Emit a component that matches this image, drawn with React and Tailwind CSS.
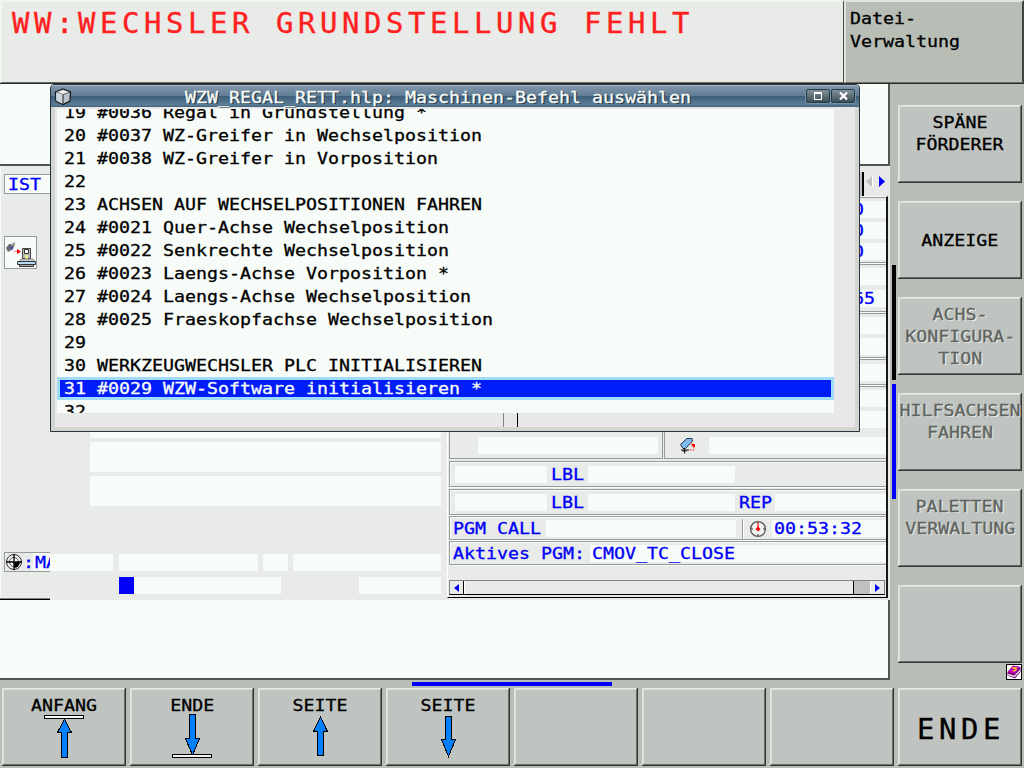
import React from "react";

function T({ children, center = false, className = "" }) {
  return (
    <span
      className={`inline-block shrink-0 whitespace-pre scale-x-[1.1419] [-webkit-text-stroke:0.3px_currentColor] ${
        center ? "origin-center" : "origin-left"
      } ${className}`}
    >
      {children}
    </span>
  );
}

function Big({ children, className = "" }) {
  return (
    <span
      className={`inline-block shrink-0 origin-left scale-x-105 whitespace-pre text-[27.5px] leading-8 tracking-[4.396px] [-webkit-text-stroke:0.35px_currentColor] ${className}`}
    >
      {children}
    </span>
  );
}

const KEY =
  "flex h-[78px] w-[124px] shrink-0 flex-col items-center bg-[#c0c4c0] pt-[7px] leading-[22px] shadow-[inset_-1px_-1px_#353535,inset_1px_1px_#e4e9e3,inset_-2px_-2px_#686c68,inset_2px_2px_#d9ded8]";

function Key({ lines = [], disabled = false, children }) {
  return (
    <div className={KEY}>
      {lines.map((l, i) => (
        <div key={i} className="flex h-[22px] justify-center">
          <T
            center
            className={disabled ? "text-[#606460] [text-shadow:1px_1px_#eef2ee]" : "text-black"}
          >
            {l}
          </T>
        </div>
      ))}
      {children}
    </div>
  );
}

const ARROWS = {
  top: "M20.5 5 L27.5 18.5 H23.5 V43.5 H17.5 V18.5 H13.5 Z",
  bottom: "M17.5 0.5 H23.5 V24.5 H27.5 L20.5 41 L13.5 24.5 H17.5 Z",
  up: "M20.5 1 L27.5 15.5 H23.5 V39.5 H17.5 V15.5 H13.5 Z",
  down: "M17.5 0.5 H23.5 V23.5 H27.5 L20.5 40.5 L13.5 23.5 H17.5 Z",
};

function Arrow({ kind }) {
  return (
    <svg
      width="42"
      height="46"
      viewBox="-1 0 42 46"
      className={kind === "up" || kind === "down" ? "-mt-px" : "-mt-[3px]"}
      shapeRendering="crispEdges"
    >
      <path d={ARROWS[kind]} fill="#0080ff" stroke="#000" />
      {kind === "top" && <rect x="0.5" y="1.5" width="39" height="3" fill="#f8fcf8" stroke="#000" />}
      {kind === "bottom" && <rect x="0.5" y="40.5" width="39" height="3" fill="#f4f0f4" stroke="#000" />}
    </svg>
  );
}

const SIDE = [
  { lines: ["SPÄNE", "FÖRDERER"] },
  { lines: [" ", "ANZEIGE"] },
  { lines: ["ACHS-", "KONFIGURA-", "TION"], disabled: true },
  { lines: ["HILFSACHSEN", "FAHREN"], disabled: true },
  { lines: ["PALETTEN", "VERWALTUNG"], disabled: true },
  { lines: [] },
];

const LIST = [
  "19 #0036 Regal in Grundstellung *",
  "20 #0037 WZ-Greifer in Wechselposition",
  "21 #0038 WZ-Greifer in Vorposition",
  "22",
  "23 ACHSEN AUF WECHSELPOSITIONEN FAHREN",
  "24 #0021 Quer-Achse Wechselposition",
  "25 #0022 Senkrechte Wechselposition",
  "26 #0023 Laengs-Achse Vorposition *",
  "27 #0024 Laengs-Achse Wechselposition",
  "28 #0025 Fraeskopfachse Wechselposition",
  "29",
  "30 WERKZEUGWECHSLER PLC INITIALISIEREN",
  "31 #0029 WZW-Software initialisieren *",
  "32",
];

function CubeIcon() {
  return (
    <svg width="18" height="18" viewBox="0 0 18 18">
      <path d="M1.5 4 L9 1 L16.5 4 L16 13 L9 16.5 L2 13 Z" fill="#b9c3cb" stroke="#111" strokeWidth="1.2" />
      <path d="M2 4 L9 1.5 L16 4 L9 6.5 Z" fill="#eef3f6" stroke="#333" strokeWidth=".7" />
      <path d="M9 6.500 V16 L2.300 12.700 L2 4.500 Z" fill="#ccd5dc" />
      <path d="M9 6.500 V16" stroke="#222" />
    </svg>
  );
}

function TitleButton({ children }) {
  return (
    <div className="flex h-[14px] w-6 items-center justify-center rounded-[2px] border border-[#283c48] bg-linear-to-b from-[#82909c] to-[#3c5058] shadow-[0_0_0_1px_#7490a4]">
      {children}
    </div>
  );
}

function HelpWindow() {
  return (
    <div className="absolute left-[50px] top-[84px] flex h-[348px] w-[810px] flex-col overflow-hidden rounded-t-[4px] border border-[#26353f] bg-[#d5d5cf]">
      <div className="flex h-[22px] shrink-0 items-center border-t border-[#a9b5c4] bg-[linear-gradient(#8296ac_0%,#607e94_46%,#3e5f7a_50%,#5c7d94_90%,#3c5f7c_100%)] pl-[3px] pr-1">
        <CubeIcon />
        <div className="ml-[113px] h-[21px] flex-1 leading-[23px] text-[#f8fcf8] [text-shadow:1px_1px_#243440]">
          <T>WZW_REGAL_RETT.hlp: Maschinen-Befehl auswählen</T>
        </div>
        <div className="-mt-[2px] flex gap-px">
          <TitleButton>
            <span className="h-2 w-2 border border-t-2 border-white" />
          </TitleButton>
          <TitleButton>
            <svg width="9" height="8" viewBox="0 0 9 8">
              <path d="M1 .5 L8 7.5 M8 .5 L1 7.5" stroke="#fff" strokeWidth="2.2" />
            </svg>
          </TitleButton>
        </div>
      </div>
      <div className="mb-1 ml-1 mr-1 flex flex-1 flex-col bg-[#e8e8e8] pl-[2px] pt-[2px]">
        <div className="h-[304px] w-[777px] overflow-hidden bg-[#f8fcf8]">
          <div className="-mt-2">
            {LIST.map((l) =>
              l.startsWith("31") ? (
                <div
                  key={l}
                  className="h-[23px] border-[3px] border-[#a0dcf8] bg-[#001cf8] pl-[3.5px] leading-[17px] text-[#f8fcf8]"
                >
                  <T>{l}</T>
                </div>
              ) : (
                <div key={l} className="h-[23px] pl-[6.5px] leading-[23px]">
                  <T>{l}</T>
                </div>
              )
            )}
          </div>
        </div>
        <div className="flex h-[14px]">
          <div className="w-[447px] border-r border-[#808480]" />
          <div className="w-[14px] border-r border-black" />
        </div>
      </div>
    </div>
  );
}

const W = "bg-[#f8fcf8]";
const BOX = "flex shrink-0 border border-r-0 border-[#989c98] shadow-[inset_1px_1px_#f8fcf8,0_1px_#f8fcf8]";

function LeftPanel() {
  return (
    <div className="flex w-[447px] flex-col border-l border-[#f8fcf8] bg-[#e8ebe7]">
      <div className={`ml-[3px] mt-[8px] h-5 w-[60px] border border-[#989c98] pl-[3px] leading-5 text-[#0000f8] ${W}`}>
        <T>IST</T>
      </div>
      <div className={`ml-[3px] mt-[42px] h-[33px] w-[33px] border border-[#989c98] ${W}`}>
        <svg width="31" height="31" viewBox="0 0 31 31">
          <path d="M1 11 L4 7 L10 7 L8 12 L3 15 Z" fill="#686c70" />
          <path d="M6 8 L10 6" stroke="#aaa" strokeWidth="2" />
          <path d="M4 10 h4 v3" fill="#4444c0" />
          <path d="M9 14.5 H12" stroke="#e88" />
          <path d="M12 12 L16 14.5 L12 17 Z" fill="#f00" />
          <path d="M17.500 11.500 h8 v10 h-8 Z" fill="#b8bcb8" stroke="#444" />
          <path d="M19.500 12.500 h4 v4 h-4 Z" fill="#fff" stroke="#333" />
          <path d="M20 18 h3 v4 h-3 Z" fill="#ecec90" />
          <path d="M16 22 h12 l2 3 h-16 Z" fill="#ccc" stroke="#666" strokeWidth=".7" />
          <path d="M12.500 24.500 h18 v3 h-18 Z" fill="#b8d8f8" stroke="#333" />
          <path d="M14.500 27.500 h14 v2 h-14 Z" fill="#aaa" stroke="#333" />
        </svg>
      </div>
      <div className="ml-[89px] mt-[139px] flex w-[351px] flex-col gap-1">
        <div className={`h-[30px] ${W}`} />
        <div className={`h-[30px] ${W}`} />
        <div className={`h-[30px] ${W}`} />
      </div>
      <div className="ml-[3px] mt-[46px] flex h-5">
        <div className="flex w-[46px] overflow-hidden border border-r-0 border-[#989c98]">
          <svg width="18" height="18" viewBox="0 0 18 18" className="shrink-0">
            <circle cx="9" cy="9" r="7.500" fill="#f0f2f0" stroke="#333" />
            <circle cx="9" cy="9" r="4.500" fill="#fff" stroke="#333" strokeWidth=".8" />
            <path d="M9 9 H15 A6 6 0 0 1 9 15 Z" fill="#000" />
            <path d="M9 1 V17 M1 9 H17" stroke="#000" strokeWidth="1.300" />
          </svg>
          <span className="w-[10px] leading-5 text-[#0000f8]">
            <T>:</T>
          </span>
          <span className={`flex-1 overflow-hidden pl-[2px] leading-5 text-[#0000f8] ${W}`}>
            <T>MA</T>
          </span>
        </div>
        <div className="flex">
          <div className={`mt-[2px] h-[17px] w-[63px] ${W}`} />
          <div className={`ml-[6px] mt-[2px] h-[17px] w-[139px] ${W}`} />
          <div className={`ml-[5px] mt-[2px] h-[17px] w-[25px] ${W}`} />
          <div className={`ml-[5px] mt-[2px] h-[17px] w-[148px] ${W}`} />
        </div>
      </div>
      <div className="ml-[118px] mt-[5px] flex h-[17px]">
        <div className="w-[15px] bg-[#0000f8]" />
        <div className={`w-[147px] ${W}`} />
        <div className={`ml-[78px] w-[82px] ${W}`} />
      </div>
      <div className="-ml-px mt-1 h-[2px] w-[50px] border-b border-t border-b-black border-t-[#808480]" />
    </div>
  );
}

const STUBS = [
  { mt: "mt-[3px]", text: "0" },
  { mt: "mt-[4px]", text: "0" },
  { mt: "mt-[4px]", text: "0" },
  { mt: "mt-[2px]", line: true },
  { mt: "mt-[3px]" },
  { mt: "mt-[5px]", text: "65" },
  { mt: "mt-[4px]", line: true },
  { mt: "mt-[3px]" },
  { mt: "mt-[4px]" },
  { mt: "mt-[2px]", line: true },
  { mt: "mt-[4px]" },
  { mt: "mt-[3px]", line: true },
  { mt: "mt-[3px]" },
  { mt: "mt-[4px]" },
];

function ClockIcon() {
  return (
    <svg width="18" height="18" viewBox="0 0 18 18" className="shrink-0">
      <circle cx="9" cy="9" r="7.400" fill="#f0f4f0" stroke="#555" strokeWidth="1.300" />
      <path d="M9 2 V4 M9 14 V16 M2 9 H4 M14 9 H16" stroke="#333" />
      <path d="M9 2.500 V9" stroke="#f44" strokeWidth="1.500" />
      <path d="M9 6.500 L11.500 9 L9 11.500 L6.500 9 Z" fill="#f00" />
    </svg>
  );
}

function StatusPanel() {
  return (
    <div className="flex flex-1 flex-col bg-[#e8e8e8]">
      <div className="flex h-[30px] items-end justify-end">
        <div className="h-6 w-10 border-r-2 border-black bg-[#c0c0c0]" />
        <svg width="26" height="24" viewBox="0 0 26 24">
          <path d="M8 4 V15 L2 9.500 Z" fill="#c0c0c0" />
          <path d="M8.500 4 V15" stroke="#fff" />
          <path d="M15 4 V15 L21 9.500 Z" fill="#0000f8" />
        </svg>
      </div>
      <div className="flex h-[402px] w-[441px] flex-col border-b border-l border-r-2 border-b-black border-l-white border-r-[#181818] border-t bg-[#e8ebe7] border-t-[#f8fcf8] pl-px">
        <div className="flex h-[234px] shrink-0 flex-col items-end overflow-hidden border-t border-[#989c98]">
          {STUBS.map((s, i) =>
            s.line ? (
              <div key={i} className={`h-[3px] w-full shrink-0 border-b border-t border-[#989c98] bg-[#f8fcf8] ${s.mt}`} />
            ) : (
              <div key={i} className={`h-[17px] w-9 shrink-0 pl-[3px] leading-[18px] text-[#0000f8] ${W} ${s.mt}`}>
                {s.text && <T>{s.text}</T>}
              </div>
            )
          )}
        </div>
        <div className="flex h-[28px] shrink-0">
          <div className="flex h-[28px] w-[214px] border-b border-l border-r border-[#989c98] pl-7 pt-[6px]">
            <div className={`h-[17px] w-[180px] ${W}`} />
          </div>
          <div className="ml-px flex h-[28px] flex-1 border-b border-l border-[#989c98] pl-[14px] pt-[6px]">
            <svg width="18" height="18" viewBox="0 0 18 18">
              <path d="M1.500 7.500 L8 1.500 L13 1.500 L13.500 4 L6.500 11.500 L4 11.500 Z" fill="#80bcf4" stroke="#234" />
              <path d="M11 5 L14.500 8 L15 13 H8" fill="none" stroke="#f44" strokeDasharray="2 1" />
              <path d="M12 7 h4 v3 h-2 Z" fill="#f00" />
              <path d="M2 13 H10 M5.500 11 V16.500 M3.500 14 H7.500" stroke="#222" strokeWidth="1.100" />
            </svg>
            <div className={`ml-3 h-[17px] flex-1 ${W}`} />
          </div>
        </div>
        <div className={`${BOX} mt-[2px] h-[26px] pl-[5px] pt-1 leading-[18px] text-[#0000f8]`}>
          <div className={`h-[17px] w-[92px] ${W}`} />
          <div className="w-[41px] pl-1"><T>LBL</T></div>
          <div className={`h-[17px] w-[147px] ${W}`} />
        </div>
        <div className={`${BOX} mt-[2px] h-[26px] pl-[5px] pt-1 leading-[18px] text-[#0000f8]`}>
          <div className={`h-[17px] w-[92px] ${W}`} />
          <div className="w-[41px] pl-1"><T>LBL</T></div>
          <div className={`h-[17px] w-[147px] ${W}`} />
          <div className="w-10 pl-1"><T>REP</T></div>
          <div className={`h-[17px] flex-1 ${W}`} />
        </div>
        <div className={`${BOX} mt-px h-6 pl-[3px] pt-[3px] leading-[18px] text-[#0000f8]`}>
          <div className="w-[93px]"><T>PGM CALL</T></div>
          <div className={`h-[17px] w-[190px] ${W}`} />
          <div className="-mt-px ml-[6px] h-5 w-[2px] border-l border-[#989c98] bg-white" />
          <div className="ml-[5px] w-[23px]"><ClockIcon /></div>
          <div className={`h-[17px] flex-1 pl-[2px] ${W}`}><T>00:53:32</T></div>
        </div>
        <div className={`${BOX} mt-px h-6 pl-[3px] pt-[3px] leading-[18px] text-[#0000f8]`}>
          <div className="w-[137px]"><T>Aktives PGM:</T></div>
          <div className={`h-[17px] flex-1 pl-[2px] ${W}`}><T>CMOV_TC_CLOSE</T></div>
        </div>
        <div className="mr-px mt-[15px] flex h-[15px] border border-[#808480] border-b-black bg-[#c0c0c0]">
          <div className="flex w-[14px] items-center justify-center border-r border-black bg-[#e8ebe7]">
            <svg width="5" height="8" viewBox="0 0 5 8"><path d="M5 0 V8 L0 4 Z" fill="#0000f8" /></svg>
          </div>
          <div className="w-[390px] border-l border-r border-l-white border-r-black bg-[#e8ebe7]" />
          <div className="flex-1" />
          <div className="flex w-[14px] items-center justify-center border-l border-white bg-[#e8ebe7]">
            <svg width="5" height="8" viewBox="0 0 5 8"><path d="M0 0 V8 L5 4 Z" fill="#0000f8" /></svg>
          </div>
        </div>
      </div>
      <div className="flex-1" />
    </div>
  );
}

function BookIcon() {
  return (
    <svg width="16" height="16" viewBox="0 0 16 16">
      <rect x=".5" y=".5" width="15" height="15" fill="#fff" stroke="#000" />
      <path d="M1.500 8 L7 1.500 L14.500 3 L14.500 8 L9 14.500 L1.500 11.500 Z" fill="#800080" />
      <path d="M2 8 L7.500 2 L14 3 L9 9.500 Z" fill="#c800c0" />
      <path d="M2 10.500 L8.500 12.500 L14 6.500" fill="none" stroke="#d8d8d8" strokeWidth="1.500" />
      <path d="M6.500 4 L10 4 L10 6 L7 7.200" fill="none" stroke="#ffe800" strokeWidth="1.300" />
    </svg>
  );
}

export default function App() {
  return (
    <div className="relative flex h-[768px] w-[1024px] flex-col overflow-hidden bg-[#b8beb6] text-base leading-[23px] text-black [font-family:'DejaVu_Sans_Mono',monospace]">
      <div className="flex h-[84px] shrink-0 border-b border-[#282c28]">
        <div className="w-[844px] border-b border-l-2 border-r border-t-2 border-b-[#686c68] border-l-[#f2f6f1] border-r-[#484c48] border-t-[#f2f6f1] bg-[#e8ebe7] pl-[10px] pt-[5px] text-[#ff2020]">
          <Big>WW:WECHSLER GRUNDSTELLUNG FEHLT</Big>
        </div>
        <div className="flex w-[180px] flex-col border-b border-l-2 border-r-2 border-t-2 border-b-[#686c68] border-l-[#e0e4df] border-r-[#404440] border-t-[#e0e4df] pl-1 pt-[5px]">
          <T className="self-start">Datei-</T>
          <T className="self-start">Verwaltung</T>
        </div>
      </div>
      <div className="flex h-[596px] shrink-0">
        <div className="flex w-[890px] flex-col">
          <div className={`h-[82px] shrink-0 border-b-2 border-r-2 border-[#505450] ${W}`} />
          <div className="flex h-[434px] shrink-0">
            <LeftPanel />
            <StatusPanel />
          </div>
          <div className={`flex-1 border-b-2 border-r-2 border-[#505450] ${W}`} />
        </div>
        <div className="w-2 pl-[2px] pt-[181px]">
          <div className="h-[115px] w-1 bg-black" />
          <div className="mt-1 h-[115px] w-1 bg-[#0000f8]" />
        </div>
        <div className="flex w-[126px] flex-col pt-[21px]">
          <div className="flex flex-col gap-[18px]">
            {SIDE.map((k, i) => (
              <Key key={i} {...k} />
            ))}
          </div>
          <div className="mr-[2px] mt-px flex justify-end">
            <BookIcon />
          </div>
        </div>
      </div>
      <div className="flex h-2 shrink-0 pl-[412px] pt-[2px]">
        <div className="h-1 w-[200px] bg-[#0000f8]" />
      </div>
      <div className="flex shrink-0 gap-1 pl-[2px]">
        <Key lines={["ANFANG"]}><Arrow kind="top" /></Key>
        <Key lines={["ENDE"]}><Arrow kind="bottom" /></Key>
        <Key lines={["SEITE"]}><Arrow kind="up" /></Key>
        <Key lines={["SEITE"]}><Arrow kind="down" /></Key>
        <Key />
        <Key />
        <Key />
        <Key>
          <div className="flex w-full pl-[19px] pt-[18px]">
            <Big>ENDE</Big>
          </div>
        </Key>
      </div>
      <HelpWindow />
    </div>
  );
}
